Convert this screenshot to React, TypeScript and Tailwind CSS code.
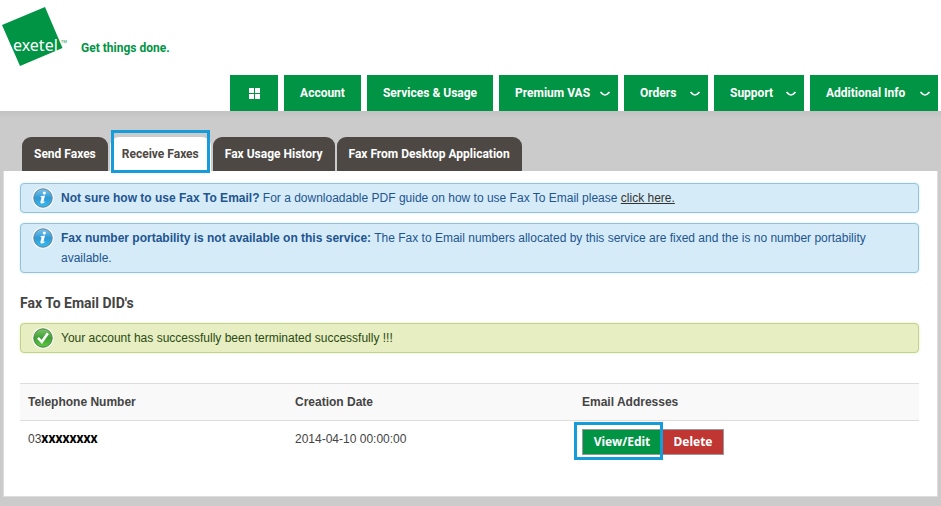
import React from 'react'
import clsx from 'clsx'

type NavItem = {
  label: string
  width: string
  menu?: boolean
}

const navItems: NavItem[] = [
  { label: 'Account', width: 'w-[77px]' },
  { label: 'Services & Usage', width: 'w-[126px]' },
  { label: 'Premium VAS', width: 'w-[119px]', menu: true },
  { label: 'Orders', width: 'w-[84px]', menu: true },
  { label: 'Support', width: 'w-[90px]', menu: true },
  { label: 'Additional Info', width: 'w-[128px]', menu: true },
]

const Logo = () => (
  <svg width="68" height="68" viewBox="0 0 68 68" role="img" aria-label="exetel">
    <path d="M2 25 45 7 62.500 48 20 66Z" fill="#009444" />
    <text x="13" y="51" fontSize="16" fill="#fff" fontFamily="'Noto Sans', sans-serif">
      exetel
    </text>
    <text x="61" y="43" fontSize="4" fill="#009444" fontFamily="'Noto Sans', sans-serif">
      TM
    </text>
  </svg>
)

const Chevron = () => (
  <svg width="10" height="8" viewBox="0 0 10 8" fill="none" aria-hidden="true">
    <path d="M0.500 3C2 4.600 3.500 6 5 6S8 4.600 9.500 3" stroke="#fff" strokeWidth="1.700" />
  </svg>
)

const InfoIcon = () => (
  <svg width="22" height="22" viewBox="0 0 22 22" className="shrink-0" aria-hidden="true">
    <defs>
      <linearGradient id="info-fill" x1="0" y1="0" x2="0" y2="1">
        <stop offset="0" stopColor="#7cc4ea" />
        <stop offset="0.500" stopColor="#2e9ad6" />
        <stop offset="1" stopColor="#35bdf2" />
      </linearGradient>
    </defs>
    <circle cx="11" cy="11" r="10.800" fill="#f2f7fa" />
    <circle cx="11" cy="11" r="9.200" fill="url(#info-fill)" stroke="#5f8398" />
    <circle cx="12.300" cy="6" r="1.600" fill="#fff" />
    <path d="M8.600 9.200 13 8.600 11.500 14.500Q11.500 15.200 13.200 14.300L12.900 15.200Q10.600 16.900 9 16.500 8.100 16 8.500 14.500L9.600 10.300 8.400 10.100Z" fill="#fff" />
  </svg>
)

const SuccessIcon = () => (
  <svg width="22" height="22" viewBox="0 0 22 22" className="shrink-0" aria-hidden="true">
    <defs>
      <linearGradient id="success-fill" x1="0" y1="0" x2="0" y2="1">
        <stop offset="0" stopColor="#7cc56a" />
        <stop offset="0.500" stopColor="#3f9f35" />
        <stop offset="1" stopColor="#5fcb3f" />
      </linearGradient>
    </defs>
    <circle cx="11" cy="11" r="10.800" fill="#f6faf0" />
    <circle cx="11" cy="11" r="9.200" fill="url(#success-fill)" stroke="#4f7f4a" />
    <path d="M6 10.800 9.800 15 15.800 6.200" fill="none" stroke="#fff" strokeWidth="2.600" />
  </svg>
)

type AlertProps = {
  tone: 'info' | 'success'
  children: React.ReactNode
}

const Alert = ({ tone, children }: AlertProps) => (
  <div
    className={clsx(
      'flex gap-[7px] rounded border py-1 pr-8 pl-[11px] text-[12px] leading-5',
      tone === 'info'
        ? 'border-[#96c2d9] bg-[#d5ecf8] text-[#235490] shadow-[0_0_3px_#d5ecf8]'
        : 'border-[#c1d28d] bg-[#e6eec2] text-[#2d4a12] shadow-[0_0_3px_#e6eec2]',
    )}
  >
    <div className="-mt-px h-5">{tone === 'info' ? <InfoIcon /> : <SuccessIcon />}</div>
    <p>{children}</p>
  </div>
)

const tabClass =
  'block h-[34px] rounded-t-[9px] px-3 font-[Roboto,sans-serif] text-[12px] leading-[34px] font-bold whitespace-nowrap'

const App = () => {
  return (
    <div className="min-h-screen bg-[#cbcbcb] pb-[10px] font-['Liberation_Sans',Arial,sans-serif] text-[#444]">
      <header className="bg-white">
        <div className="flex h-[75px] items-start gap-[13px]">
          <a href="#home">
            <Logo />
          </a>
          <p className="pt-[38px] font-[Roboto,sans-serif] text-[12px] leading-5 font-bold text-[#009444]">
            Get things done.
          </p>
        </div>
        <nav className="flex justify-end gap-[6px] pr-[3px] font-[Roboto,sans-serif] text-[12px] font-bold text-white">
          <a href="#dashboard" aria-label="Dashboard" className="flex h-9 w-12 items-center justify-center bg-[#009444]">
            <svg width="11" height="11" viewBox="0 0 11 11" fill="#fff">
              <path d="M0 0h5v5H0zM6 0h5v5H6zM0 6h5v5H0zM6 6h5v5H6z" />
            </svg>
          </a>
          {navItems.map(({ label, width, menu }) => (
            <a
              key={label}
              href="#menu"
              className={clsx(
                'flex h-9 items-center bg-[#009444] whitespace-nowrap',
                width,
                menu ? 'justify-between pr-2 pl-4' : 'justify-center',
              )}
            >
              {label}
              {menu && <Chevron />}
            </a>
          ))}
        </nav>
      </header>

      <main className="bg-linear-to-b from-[#c3c3c3] to-[#cbcbcb] to-[8px] px-[3px] pt-[26px]">
        <nav className="flex gap-[2px] pl-[19px]">
          <a href="#send" className={clsx(tabClass, 'bg-[#4d4843] text-white')}>
            Send Faxes
          </a>
          <div className="relative">
            <a href="#receive" className={clsx(tabClass, 'bg-white text-[#4d4843]')}>
              Receive Faxes
            </a>
            <span className="pointer-events-none absolute inset-x-px -top-[7px] -bottom-[2px] border-3 border-[#169cd8]" />
          </div>
          <a href="#history" className={clsx(tabClass, 'bg-[#4d4843] text-white')}>
            Fax Usage History
          </a>
          <a href="#desktop" className={clsx(tabClass, 'bg-[#4d4843] text-white')}>
            Fax From Desktop Application
          </a>
        </nav>

        <section className="border border-t-0 border-[#ddd] bg-white pt-3 pr-[18px] pb-[33px] pl-4">
          <div className="flex flex-col gap-[10px]">
            <Alert tone="info">
              <strong>Not sure how to use Fax To Email?</strong> For a downloadable PDF guide on how to use Fax To Email please{' '}
              <a href="#guide" className="text-[#333] underline">
                click here.
              </a>
            </Alert>
            <Alert tone="info">
              <strong>Fax number portability is not available on this service:</strong> The Fax to Email numbers allocated by this
              service are fixed and the is no number portability available.
            </Alert>
          </div>

          <h2 className="mt-5 mb-[10px] font-[Roboto,sans-serif] text-[14px] leading-5 font-bold">Fax To Email DID's</h2>
          <Alert tone="success">Your account has successfully been terminated successfully !!!</Alert>

          <table className="mt-[30px] w-full table-fixed text-left text-[12px] leading-5">
            <thead>
              <tr className="border-y border-[#ddd] bg-[#f9f9f9]">
                <th className="w-[267px] px-2 py-2">Telephone Number</th>
                <th className="w-[287px] px-2 py-2">Creation Date</th>
                <th className="px-2 py-2">Email Addresses</th>
              </tr>
            </thead>
            <tbody>
              <tr>
                <td className="px-2 py-2 align-top">
                  03<span className="font-[Roboto,sans-serif] text-[11px] font-black text-black">XXXXXXXX</span>
                </td>
                <td className="px-2 py-2 align-top">2014-04-10 00:00:00</td>
                <td className="px-2 py-2">
                  <div className="flex font-['Noto_Sans',sans-serif] text-[12px] font-bold text-white">
                    <div className="relative">
                      <button className="block h-[26px] w-[80px] border border-[#999] bg-[#009444]">View/Edit</button>
                      <span className="pointer-events-none absolute -top-[7px] -right-px -bottom-[5px] -left-2 border-3 border-[#169cd8]" />
                    </div>
                    <button className="h-[26px] w-[62px] border border-[#999] bg-[#c03632]">Delete</button>
                  </div>
                </td>
              </tr>
            </tbody>
          </table>
        </section>
      </main>
    </div>
  )
}

export default App
